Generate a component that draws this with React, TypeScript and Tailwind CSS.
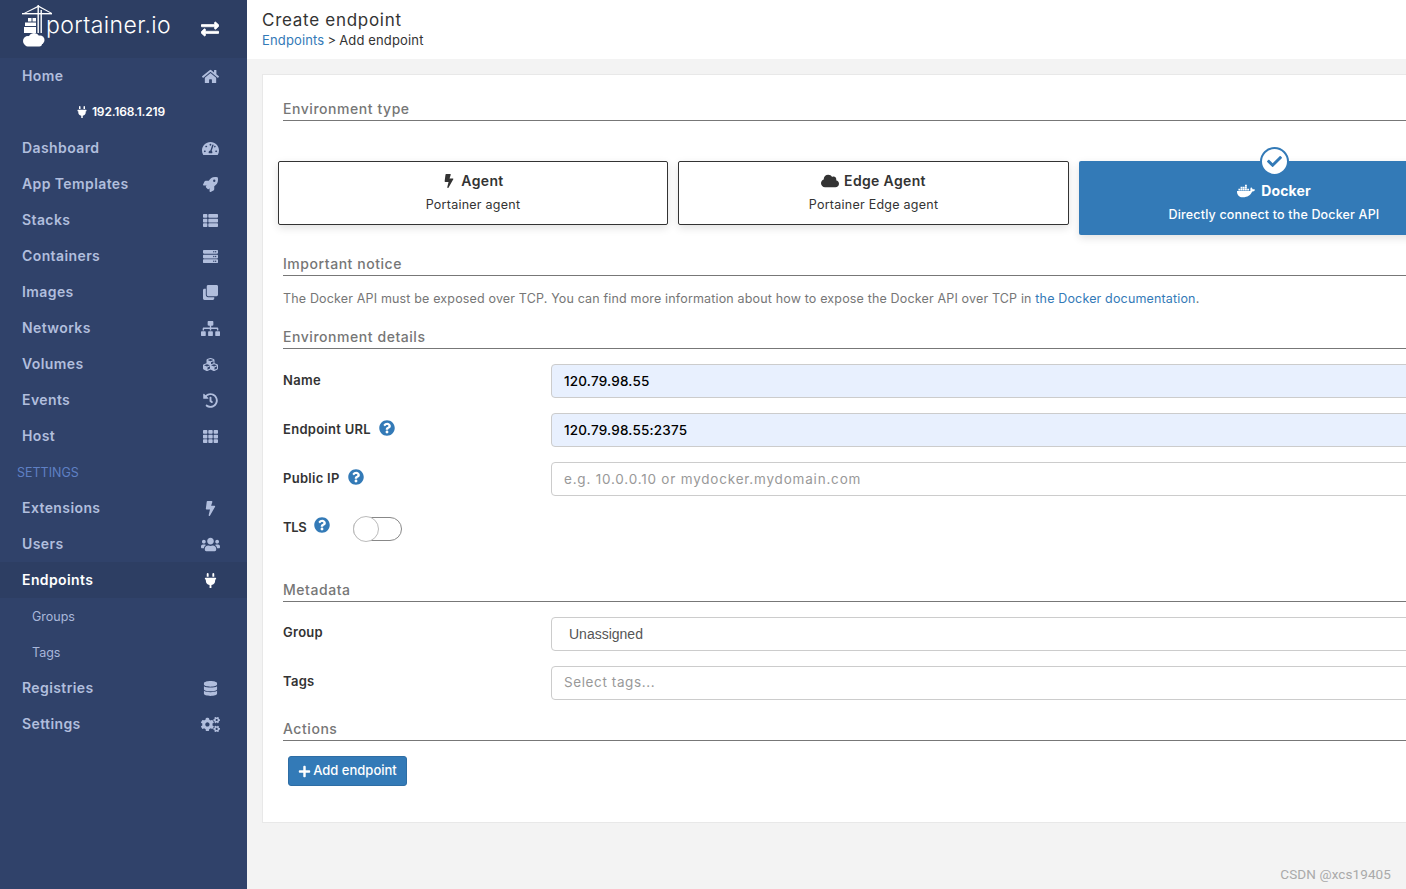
import type { ReactNode, ComponentType } from 'react'
import {
  FaBolt,
  FaCheck,
  FaClone,
  FaCloud,
  FaCogs,
  FaCubes,
  FaDatabase,
  FaDocker,
  FaExchangeAlt,
  FaHistory,
  FaHome,
  FaPlug,
  FaPlus,
  FaQuestionCircle,
  FaRocket,
  FaServer,
  FaSitemap,
  FaTachometerAlt,
  FaTh,
  FaThList,
  FaUsers,
} from 'react-icons/fa'

type Icon = ComponentType<{ className?: string }>

function Logo() {
  return (
    <div className="flex items-center pl-[22px] h-full">
      <svg width="32" height="42" viewBox="0 0 32 42" className="shrink-0 -mt-[6px]" fill="#fff">
        <rect x="0" y="8" width="30" height="1.4" />
        <rect x="15.5" y="0" width="1.4" height="28" />
        <rect x="18.5" y="5" width="1.4" height="23" />
        <path d="M16.5 0.5 L30 8 L28 8 L16.5 2 Z" />
        <path d="M16.5 0.5 L2 8 L4 8 L16.5 2 Z" />
        <rect x="6" y="13" width="3.5" height="3.5" />
        <rect x="10.5" y="13" width="3.5" height="3.5" />
        <rect x="3" y="17.5" width="11" height="3.5" />
        <rect x="2" y="22" width="12" height="6" />
        <circle cx="6" cy="36" r="5" />
        <circle cx="12" cy="33.5" r="5.5" />
        <circle cx="18" cy="35" r="4.5" />
        <rect x="3" y="36" width="17" height="5.5" rx="2.7" />
      </svg>
      <span className="text-white text-[23px] font-light -ml-[8px] -mt-[8px] tracking-[0.4px]">portainer.io</span>
    </div>
  )
}

function NavRow({ label, icon: I, active, iconClass = 'w-[15px] h-[15px]' }: { label: string; icon: Icon; active?: boolean; iconClass?: string }) {
  return (
    <div className={`flex items-center justify-between h-9 pl-[22px] pr-[25px] text-[14px] font-semibold tracking-[0.4px] ${active ? 'bg-[#2d3e63] text-white' : 'text-[#b1bedd]'}`}>
      <span className="-mt-[2px]">{label}</span>
      <span className="w-6 flex justify-center">
        <I className={iconClass} />
      </span>
    </div>
  )
}

function Sidebar() {
  return (
    <aside className="w-[247px] shrink-0 min-h-[889px] bg-[#30426a]">
      <div className="h-[58px] bg-[#2d3e63] relative">
        <Logo />
        <FaExchangeAlt className="absolute left-[201px] top-[20px] text-white text-[18px] stroke-[20px]" />
      </div>
      <NavRow label="Home" icon={FaHome} iconClass="w-[17px] h-[17px]" />
      <div className="h-9 flex items-center justify-center gap-[4px] pr-[6px] text-white text-[12px] font-semibold tracking-[-0.15px]">
        <FaPlug className="text-[12px]" />
        <span>192.168.1.219</span>
      </div>
      <NavRow label="Dashboard" icon={FaTachometerAlt} iconClass="w-[17px] h-[17px]" />
      <NavRow label="App Templates" icon={FaRocket} />
      <NavRow label="Stacks" icon={FaThList} />
      <NavRow label="Containers" icon={FaServer} />
      <NavRow label="Images" icon={FaClone} />
      <NavRow label="Networks" icon={FaSitemap} iconClass="w-[19px] h-[19px]" />
      <NavRow label="Volumes" icon={FaCubes} />
      <NavRow label="Events" icon={FaHistory} />
      <NavRow label="Host" icon={FaTh} />
      <div className="h-9 flex items-center pl-[17px] pt-[2px] text-[12.5px] text-[#5f80c4]">SETTINGS</div>
      <NavRow label="Extensions" icon={FaBolt} />
      <NavRow label="Users" icon={FaUsers} iconClass="w-[19px] h-[19px]" />
      <NavRow label="Endpoints" icon={FaPlug} active />
      <div className="h-9 flex items-center pl-8 pt-[2px] text-[12.5px] text-[#a9b7da]">Groups</div>
      <div className="h-9 flex items-center pl-8 pt-[2px] text-[12.5px] text-[#a9b7da]">Tags</div>
      <NavRow label="Registries" icon={FaDatabase} />
      <NavRow label="Settings" icon={FaCogs} iconClass="w-[19px] h-[19px]" />
    </aside>
  )
}

function SectionTitle({ children, className = '' }: { children: ReactNode; className?: string }) {
  return (
    <div className={`ml-[20px] h-[22px] border-b border-[#777] text-[14px] font-medium tracking-[0.55px] leading-[20px] text-[#767676] ${className}`}>
      {children}
    </div>
  )
}

function TypeBox({ icon: I, title, sub, wide, iconClass = 'w-[14px] h-[14px]' }: { icon: Icon; title: string; sub: string; wide?: boolean; iconClass?: string }) {
  return (
    <div className={`${wide ? 'w-[391px]' : 'w-[390px]'} h-16 shrink-0 rounded-[2px] border border-[#333] shadow-[0_3px_8px_rgba(0,0,0,0.12)] flex flex-col items-center pt-[9px] text-[#333]`}>
      <div className="flex items-center gap-[5px] h-[19px] text-[14px] font-semibold tracking-[0.35px]">
        <I className={iconClass} />
        <span>{title}</span>
      </div>
      <div className="mt-[6px] text-[12.5px] leading-[18px] tracking-[0.25px]">{sub}</div>
    </div>
  )
}

function Help() {
  return <FaQuestionCircle className="text-[#337ab7] text-[16px] shrink-0" />
}

type FieldProps = {
  label: string
  help?: boolean
  className?: string
  labelClass?: string
  children: ReactNode
  filled?: boolean
}

function FieldRow({ label, help, className = '', labelClass = 'pt-[7px]', children, filled }: FieldProps) {
  return (
    <div className={`flex ml-[20px] h-[34px] ${className}`}>
      <div className={`w-[268px] shrink-0 flex items-start gap-[8px] text-[#333] text-[13px] font-semibold tracking-[0.28px] ${labelClass}`}>
        <span className="leading-[18px]">{label}</span>
        {help && <Help />}
      </div>
      <div className={`flex-1 rounded-[4px] border border-[#ccc] flex items-center ${filled ? 'bg-[#e8f0fe]' : 'bg-white'}`}>
        {children}
      </div>
    </div>
  )
}

function Card() {
  return (
    <section className="w-[1200px] h-[749px] ml-[15px] mt-[15px] bg-white border border-[#e8e8e8] pt-6">
      <SectionTitle>Environment type</SectionTitle>
      <div className="flex gap-[10px] ml-[15px] mt-10">
        <TypeBox icon={FaBolt} title="Agent" sub="Portainer agent" />
        <TypeBox icon={FaCloud} title="Edge Agent" sub="Portainer Edge agent" wide iconClass="w-[18px] h-[18px]" />
        <div className="relative w-[390px] h-[74px] shrink-0 rounded-[2px] bg-[#337ab7] shadow-[0_3px_8px_rgba(0,0,0,0.12)] flex flex-col items-center pt-5 text-white">
          <div className="absolute left-[181px] -top-[14px] w-[29px] h-[29px] rounded-full bg-white border-2 border-[#337ab7] flex items-center justify-center text-[#337ab7] text-[15px]">
            <FaCheck />
          </div>
          <div className="flex items-center gap-[6px] h-[19px] text-[14px] font-bold tracking-[0.1px]">
            <FaDocker className="text-[18px]" />
            <span>Docker</span>
          </div>
          <div className="mt-[6px] text-[12.5px] leading-[18px] font-medium tracking-[0.17px]">Directly connect to the Docker API</div>
        </div>
      </div>
      <SectionTitle className="mt-[19px]">Important notice</SectionTitle>
      <p className="ml-[20px] mt-[13px] h-5 text-[12.5px] leading-5 tracking-[0.16px] text-[#767676]">
        The Docker API must be exposed over TCP. You can find more information about how to expose the Docker API over TCP in{' '}
        <span className="text-[#337ab7]">the Docker documentation</span>.
      </p>
      <SectionTitle className="mt-[18px]">Environment details</SectionTitle>
      <FieldRow className="mt-[15px]" label="Name" filled>
        <span className="pl-[12px] text-[13.5px] tracking-[0.2px] text-black font-medium">120.79.98.55</span>
      </FieldRow>
      <FieldRow className="mt-[15px]" label="Endpoint URL" help filled>
        <span className="pl-[12px] text-[13.5px] tracking-[0.2px] text-black font-medium">120.79.98.55:2375</span>
      </FieldRow>
      <FieldRow className="mt-[15px]" label="Public IP" help>
        <span className="pl-[12px] text-[13.5px] tracking-[0.8px] text-[#999]">e.g. 10.0.0.10 or mydocker.mydomain.com</span>
      </FieldRow>
      <div className="ml-[20px] mt-[21px] h-[24px] flex items-start gap-[8px] text-[#333] text-[13px] font-semibold">
        <span className="leading-[18px] mt-[1px] tracking-[-0.4px]">TLS</span>
        <Help />
        <div className="ml-[15px] w-[49px] h-6 rounded-full border border-[#888] relative">
          <span className="absolute -left-px -top-[2px] w-[26px] h-[26px] rounded-full bg-white border border-[#bbb]" />
        </div>
      </div>
      <SectionTitle className="mt-[39px]">Metadata</SectionTitle>
      <FieldRow className="mt-[15px]" label="Group" labelClass="pt-[6px]">
        <span className="pl-[17px] text-[14px] text-[#555] font-['Liberation_Sans',sans-serif]">Unassigned</span>
      </FieldRow>
      <FieldRow className="mt-[15px]" label="Tags" labelClass="pt-[6px]">
        <span className="pl-[12px] -mt-[2px] text-[13.5px] tracking-[0.6px] text-[#999]">Select tags...</span>
      </FieldRow>
      <SectionTitle className="mt-[19px]">Actions</SectionTitle>
      <button className="ml-[25px] mt-[15px] h-[30px] w-[119px] rounded-[3px] bg-[#337ab7] border border-[#2e6da4] text-white text-[13px] font-medium flex items-center justify-center gap-[2px]">
        <FaPlus className="text-[13px]" />
        <span>Add endpoint</span>
      </button>
    </section>
  )
}

export default function App() {
  return (
    <div className="flex h-[889px] w-[1406px] overflow-hidden bg-[#f3f3f3] font-['Inter',sans-serif]">
      <Sidebar />
      <main className="flex-1 min-w-0 relative">
        <header className="h-[59px] bg-white pl-[15px] pt-[10px]">
          <div className="text-[17px] leading-[21px] tracking-[0.72px] text-[#333]">Create endpoint</div>
          <div className="text-[13px] leading-[18px] text-[#333] tracking-[0.15px]">
            <span className="text-[#337ab7]">Endpoints</span>
            <span className="mx-[3px]">&gt;</span>
            <span>Add endpoint</span>
          </div>
        </header>
        <Card />
        <span className="absolute right-[15px] bottom-[5px] text-[13.5px] font-['Roboto',sans-serif] text-[#aaa] tracking-[0.1px]">CSDN @xcs19405</span>
      </main>
    </div>
  )
}
